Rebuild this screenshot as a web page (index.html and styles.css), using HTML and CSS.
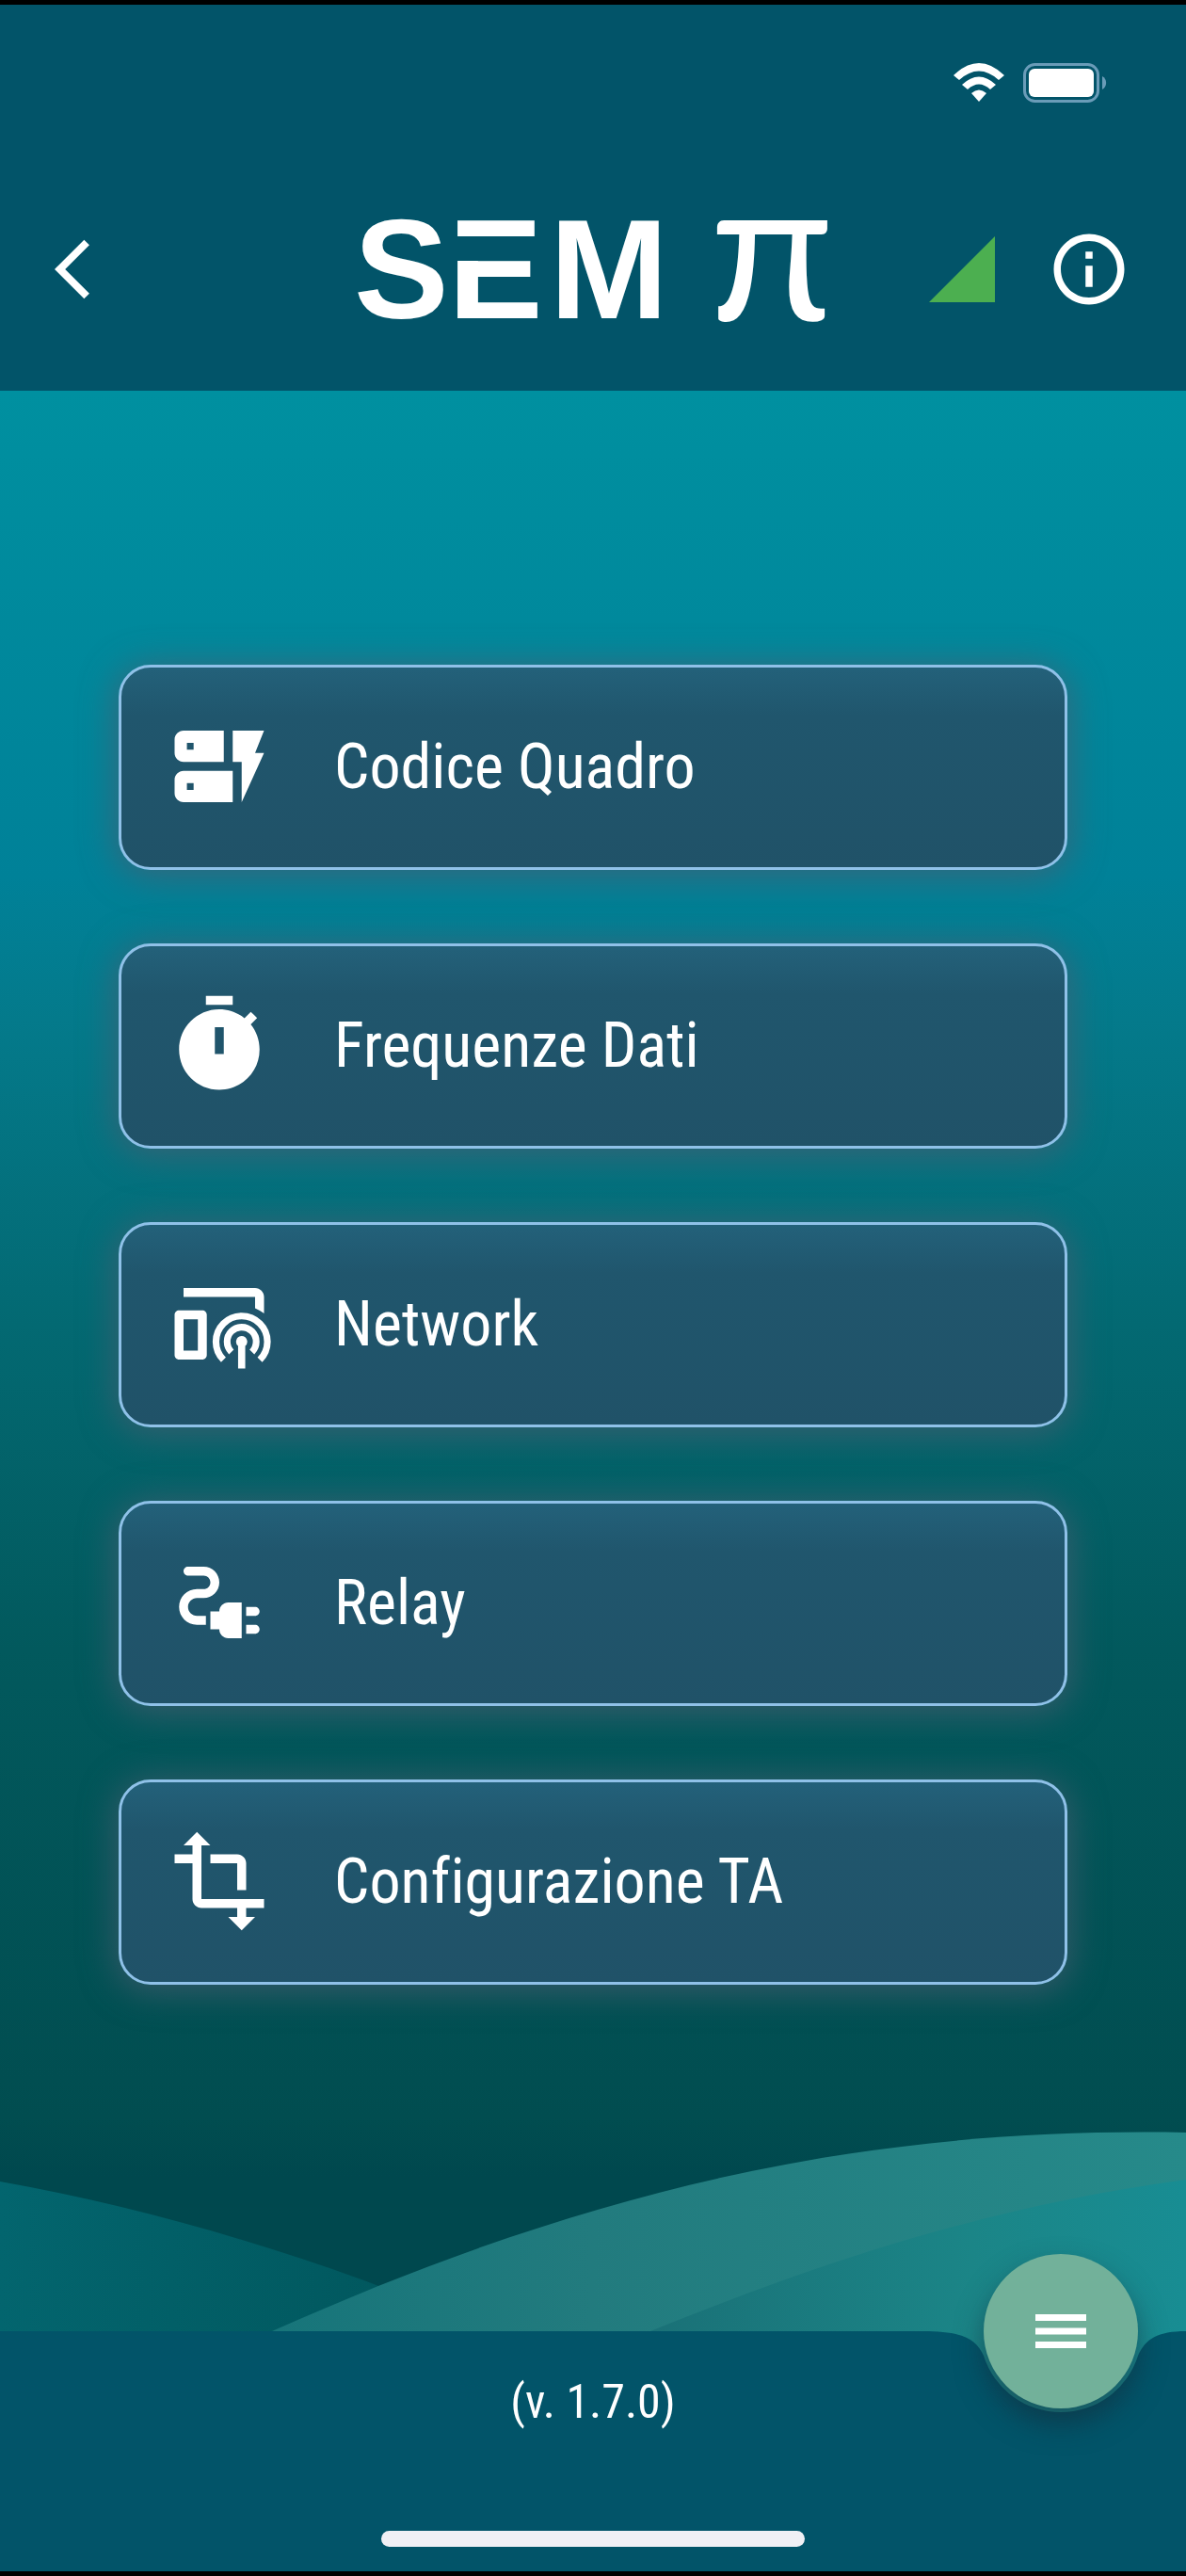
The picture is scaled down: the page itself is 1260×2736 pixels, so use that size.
FILE: index.html
```html
<!DOCTYPE html>
<html lang="it">
<head>
<meta charset="utf-8">
<meta name="viewport" content="width=device-width, initial-scale=1">
<title>SEM π</title>
<link rel="stylesheet" href="styles.css">
</head>
<body>
<div class="page">
  <header class="header">
    <div class="status">
      <svg class="status-wifi" viewBox="0 0 54 42" aria-hidden="true">
        <path d="M0 13Q27-13 54 13L48 18Q27-1 6 18Z"/>
        <path d="M9 23Q27 6 45 23L39 28Q27 17 15 28Z"/>
        <path d="M19 32Q27 25 35 32L27 41Z"/>
      </svg>
      <svg class="status-battery" viewBox="0 0 90 42" aria-hidden="true">
        <rect class="battery-shell" x="1.500" y="1.500" width="78" height="39" rx="11"/>
        <rect x="6" y="6" width="69" height="30" rx="6"/>
        <path class="battery-nub" d="M84 14a8 8 0 0 1 0 14z"/>
      </svg>
    </div>
    <div class="toolbar">
      <button class="icon-button back" type="button" aria-label="Indietro">
        <svg class="icon-back" viewBox="0 0 24 24"><path d="M11.670 3.870 9.900 2.100 0 12l9.900 9.900 1.770-1.770L3.540 12z"/></svg>
      </button>
      <svg class="logo" viewBox="0 0 500 120" role="img" aria-label="SEM π">
        <text class="logo-latin" x="-4" y="112">S</text>
        <text class="logo-latin" x="96" y="112">E</text>
        <rect class="logo-cut" x="100" y="25" width="34" height="26"/>
        <text class="logo-latin" x="204" y="112">M</text>
        <text class="logo-greek" x="374" y="115">π</text>
      </svg>
      <div class="actions">
        <svg class="icon-signal" viewBox="0 0 24 24" aria-hidden="true"><path d="M2 22h20V2z"/></svg>
        <button class="icon-button" type="button" aria-label="Informazioni">
          <svg class="icon-info" viewBox="0 0 24 24"><path d="M11 7h2v2h-2zm0 4h2v6h-2zm1-9C6.480 2 2 6.480 2 12s4.480 10 10 10 10-4.480 10-10S17.520 2 12 2zm0 18c-4.410 0-8-3.590-8-8s3.590-8 8-8 8 3.590 8 8-3.590 8-8 8z"/></svg>
        </button>
      </div>
    </div>
  </header>

  <main class="main">
    <div class="menu">
      <button class="card" type="button">
        <svg class="card-icon" viewBox="0 0 24 24" aria-hidden="true"><path fill-rule="evenodd" d="M17 20v-9h-2V4h7l-2 5h2zM15 13v7H4c-1.100 0-2-.9-2-2v-3c0-1.100.9-2 2-2zM6.250 15.750h-1.500v1.500h1.500zM13 4v7H4c-1.100 0-2-.9-2-2V6c0-1.100.9-2 2-2zM6.250 6.750h-1.500v1.500h1.500z"/></svg>
        <span>Codice Quadro</span>
      </button>
      <button class="card" type="button">
        <svg class="card-icon" viewBox="0 0 24 24" aria-hidden="true"><path fill-rule="evenodd" d="M9 1h6v2H9zM19.030 7.390l1.420-1.420c-.43-.51-.9-.99-1.410-1.410l-1.420 1.420C16.070 4.740 14.120 4 12 4c-4.970 0-9 4.030-9 9s4.020 9 9 9 9-4.030 9-9c0-2.120-.74-4.070-1.970-5.610zM13 14h-2V8h2z"/></svg>
        <span>Frequenze Dati</span>
      </button>
      <button class="card" type="button">
        <svg class="card-icon" viewBox="0 0 24 24" aria-hidden="true">
          <path d="M4 4h16c1.100 0 2 .9 2 2v3.700c-.6-.5-1.300-.9-2-1.200V6H4z"/>
          <path fill-rule="evenodd" d="M3 9h5.200c.55 0 1 .45 1 1v9c0 .55-.45 1-1 1H3c-.55 0-1-.45-1-1v-9c0-.55.45-1 1-1zM4 11v7h3.200v-7z"/>
          <path class="wave-line" d="M12.930 20.070a5.750 5.750 0 1 1 8.140 0M14.700 18.300a3.250 3.250 0 1 1 4.600 0"/>
          <path d="M17 14.750a1.250 1.250 0 0 1 .8 2.200V22h-1.600v-5.050a1.250 1.250 0 0 1 .8-2.200z"/>
        </svg>
        <span>Network</span>
      </button>
      <button class="card" type="button">
        <svg class="card-icon" viewBox="0 0 24 24" aria-hidden="true"><path d="M21 14c0-.55-.45-1-1-1h-2v2h2c.55 0 1-.45 1-1zM20 17h-2v2h2c.55 0 1-.45 1-1s-.45-1-1-1zM12 14h-2v4h2c0 1.100.9 2 2 2h3v-8h-3c-1.100 0-2 .9-2 2zM5 13c0-1.100.9-2 2-2h1.500c1.930 0 3.500-1.570 3.500-3.500S10.430 4 8.500 4H5c-.55 0-1 .45-1 1s.45 1 1 1h3.500c.83 0 1.500.67 1.500 1.500S9.330 9 8.500 9H7c-2.210 0-4 1.790-4 4s1.790 4 4 4h2v-2H7c-1.100 0-2-.9-2-2z"/></svg>
        <span>Relay</span>
      </button>
      <button class="card" type="button">
        <svg class="card-icon" viewBox="0 0 24 24" aria-hidden="true"><path d="M22 18v-2H8V4h2L7 1 4 4h2v2H2v2h4v8c0 1.100.9 2 2 2h8v2h-2l3 3 3-3h-2v-2zM10 8h6v6h2V8c0-1.100-.9-2-2-2h-6z"/></svg>
        <span>Configurazione TA</span>
      </button>
    </div>
    <svg class="waves" viewBox="0 0 1260 310" preserveAspectRatio="none" aria-hidden="true">
      <defs>
        <linearGradient id="left" x1="0" x2="1"><stop offset="0" stop-color="#03656e"/><stop offset="1" stop-color="#00545a"/></linearGradient>
        <linearGradient id="light" x1="0" x2="1"><stop offset="0" stop-color="#17757a"/><stop offset=".35" stop-color="#227b7e"/><stop offset="1" stop-color="#268a8a"/></linearGradient>
        <linearGradient id="inner" x1="0" x2="1"><stop offset="0" stop-color="#1a7177"/><stop offset=".6" stop-color="#1b8587"/><stop offset="1" stop-color="#188d93"/></linearGradient>
      </defs>
      <path fill="url(#left)" d="M0 56C180 88 360 145 522 215V310H0z"/>
      <path fill="url(#light)" d="M289 215C640 58 930-2 1260 4V310H289z"/>
      <path fill="url(#inner)" d="M691 215C900 130 1070 80 1260 54V310H691z"/>
    </svg>
  </main>

  <footer class="footer">
    <div class="footer-back" aria-hidden="true">
      <div class="footer-fill"></div>
      <svg class="footer-notch" viewBox="0 0 280 255"><path d="M0 0C42 0 57 8 65 26A86 86 0 0 0 229 26C237 8 250 0 280 0V255H0z"/></svg>
    </div>
    <p class="version">(v. 1.7.0)</p>
    <div class="home-indicator"></div>
    <button class="fab" type="button" aria-label="Menu">
      <svg class="fab-icon" viewBox="0 0 54 36"><path d="M0 0h54v7H0zM0 14.500h54v7H0zM0 29h54v7H0z"/></svg>
    </button>
  </footer>
</div>
</body>
</html>
```
FILE: styles.css
```css
* { box-sizing: border-box; }

body {
  margin: 0;
  background: #000;
  color: #fff;
  font-family: "Roboto Condensed", Roboto, sans-serif;
  font-variant-ligatures: none;
}

button {
  font: inherit;
  color: inherit;
  border: 0;
  padding: 0;
  background: none;
  cursor: pointer;
}

svg { display: block; fill: currentColor; }

.page {
  display: flex;
  flex-direction: column;
  min-height: 100vh;
  border-top: 5px solid #000;
  border-bottom: 5px solid #000;
}

.header {
  background: #025469;
  padding: 62px 58px 69px;
}

.status {
  display: flex;
  justify-content: flex-end;
  align-items: center;
  gap: 20px;
  padding-right: 25px;
  margin-bottom: 117px;
}

.status-wifi { width: 54px; height: 42px; }
.status-battery { width: 90px; height: 42px; }
.battery-shell { fill: none; stroke: #6a9cb8; stroke-width: 3; }
.battery-nub { fill: #6a9cb8; }

.toolbar {
  display: grid;
  grid-template-columns: 1fr auto 1fr;
  align-items: center;
  height: 120px;
}

.icon-button { display: block; }
.back { justify-self: start; }
.icon-back { width: 76px; height: 76px; }
.icon-info { width: 90px; height: 90px; }
.icon-signal { width: 84px; height: 84px; color: #4caf50; }

.logo { width: 500px; height: 120px; overflow: visible; }
.logo-latin { font: 700 151px "Liberation Sans", sans-serif; }
.logo-greek { font: 400 214px Lato, sans-serif; }
.logo-cut { fill: #025469; }

.actions {
  display: flex;
  align-items: center;
  justify-self: end;
  gap: 48px;
}

.main {
  flex: 1;
  display: flex;
  flex-direction: column;
  justify-content: space-between;
  background: linear-gradient(#0090a0 0%, #008198 24%, #047a8b 31%, #036972 46%, #02595d 62%, #014d50 85%, #00484e 88%);
}

.menu {
  display: flex;
  flex-direction: column;
  gap: 78px;
  padding: 291px 10% 0;
}

.card {
  display: flex;
  align-items: center;
  gap: 65px;
  height: 218px;
  padding: 0 47px 2px;
  border: 3px solid #8fc1e8;
  border-radius: 34px;
  background: linear-gradient(#23617a, #20566d 24%, #205268);
  box-shadow: 0 4px 36px 4px rgba(75, 92, 112, .7);
  font-size: 66px;
  text-align: left;
}

.card-icon { flex: none; width: 114px; height: 114px; }

.wave-line { fill: none; stroke: currentColor; stroke-width: 1.5; }

.waves { width: 100%; height: 310px; }

.footer {
  position: relative;
  display: flex;
  flex-direction: column;
  align-items: center;
  justify-content: space-between;
  height: 255px;
  margin-top: -95px;
  padding: 46px 0 26px;
}

.footer-back {
  position: absolute;
  inset: 0;
  display: flex;
  color: #025469;
}

.footer-fill { flex: 1; background: currentColor; }
.footer-notch { width: 280px; height: 255px; }

.version {
  position: relative;
  margin: 0;
  font-size: 50px;
  line-height: 58px;
}

.home-indicator {
  position: relative;
  width: 450px;
  height: 17px;
  border-radius: 9px;
  background: #f0f0f5;
}

.fab {
  position: absolute;
  top: -82px;
  right: 51px;
  display: grid;
  place-items: center;
  width: 164px;
  height: 164px;
  border-radius: 50%;
  background: #72b19a;
  box-shadow: 0 16px 30px rgba(20, 40, 55, .55);
}

.fab-icon { width: 54px; height: 36px; }
```
